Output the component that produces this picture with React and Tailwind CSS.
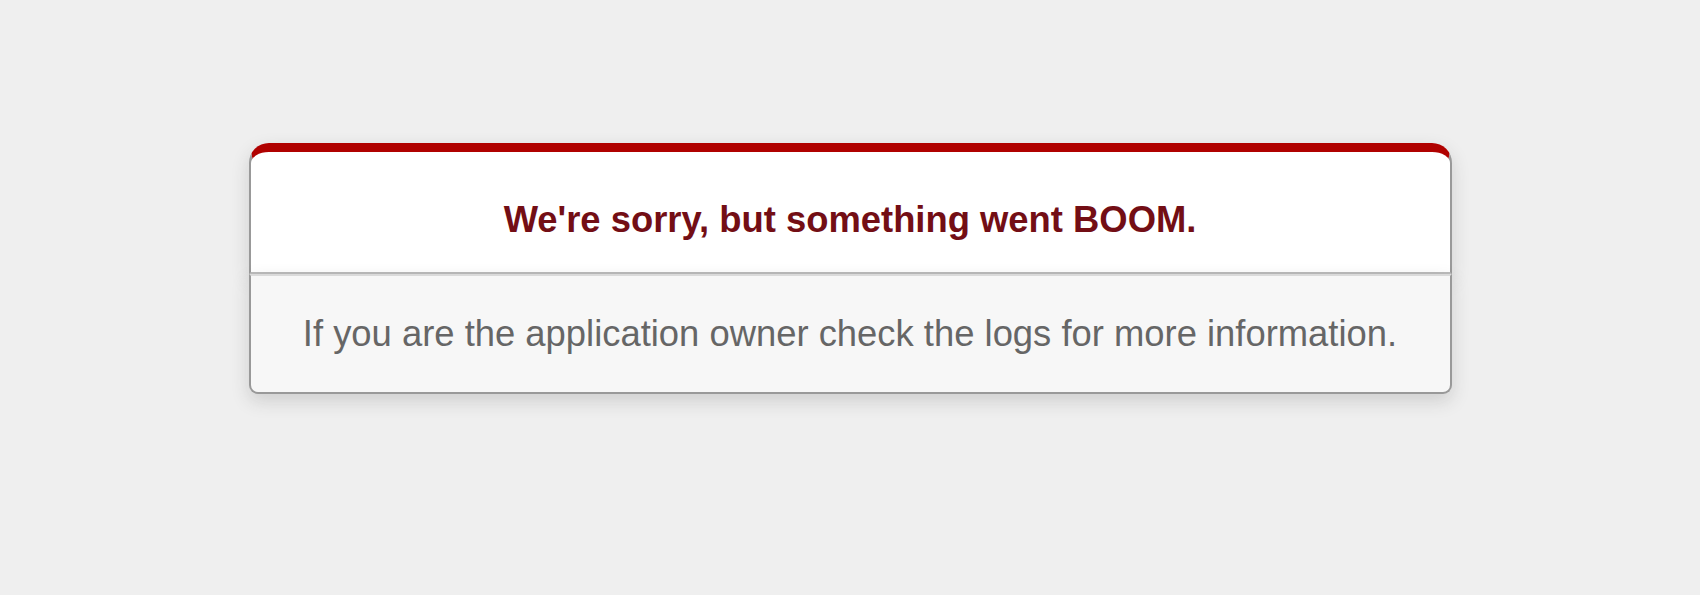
export default function App() {
  return (
    <div className="min-h-[595px] bg-[#efefef] font-['Liberation_Sans',Arial,sans-serif] text-center">
      {/* Error dialog */}
      <div className="w-[1203px] mx-auto pt-[143px]">
        <div className="bg-white border-x-2 border-b-2 border-t-[9px] border-x-[#999] border-b-[#bbb] border-t-[#b00100] rounded-t-[20px] pt-[17px] px-[12%] shadow-[0_7px_18px_rgba(50,50,50,0.17)]">
          <h1 className="mt-6 mb-[25px] text-[36.4px] leading-[54px] font-bold text-[#730e15]">
            We're sorry, but something went BOOM.
          </h1>
        </div>
        <p className="bg-[#f7f7f7] border-x-2 border-b-2 border-t-2 border-x-[#999] border-b-[#999] border-t-[#dadada] rounded-b-[9px] p-9 text-[36.4px] leading-[44px] text-[#666] shadow-[0_7px_18px_rgba(50,50,50,0.17)]">
          If you are the application owner check the logs for more information.
        </p>
      </div>
    </div>
  );
}
